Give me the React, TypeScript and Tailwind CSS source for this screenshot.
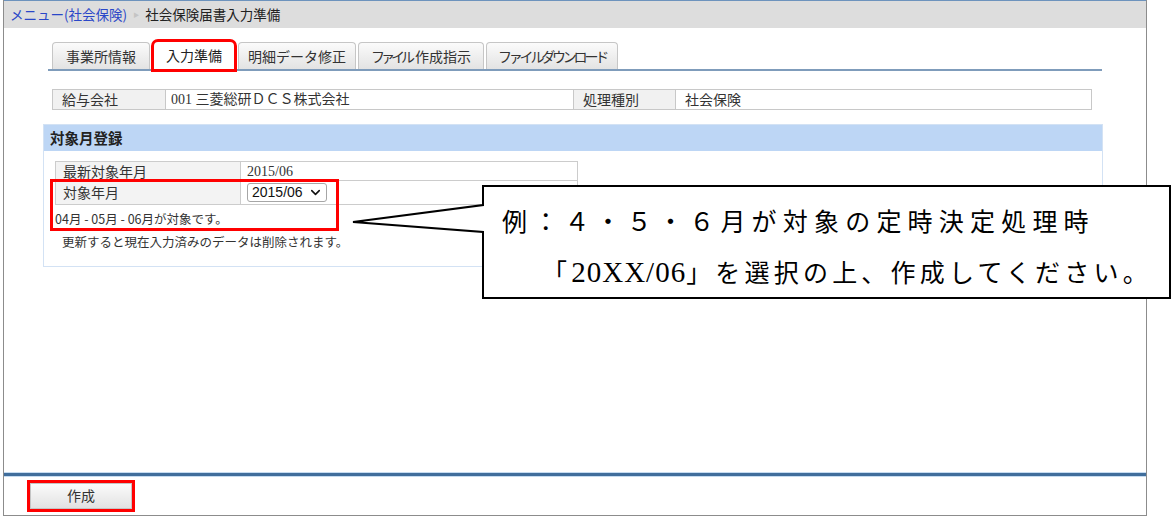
import { ChevronDown } from 'lucide-react';

const ui = "font-['Noto_Sans_CJK_JP','Noto_Sans',sans-serif]";
const serif = "font-['Liberation_Serif','Noto_Sans_CJK_JP',serif]";

type Tab = { label: React.ReactNode; key: string; width: string; active?: boolean };

const tabs: Tab[] = [
  { key: 'office', label: '事業所情報', width: 'w-[98px]' },
  { key: 'prep', label: '入力準備', width: 'w-[80px]', active: true },
  { key: 'detail', label: '明細データ修正', width: 'w-[118px]' },
  {
    key: 'make',
    label: (
      <>
        <span className="tracking-[-4px]">ファイル</span>
        <span className="ml-[4px]">作成指示</span>
      </>
    ),
    width: 'w-[126px]',
  },
  { key: 'dl', label: <span className="tracking-[-3.2px]">ファイルダウンロード</span>, width: 'w-[132px]' },
];

function Tabs() {
  return (
    <div className="ml-[44px] mt-[14px] w-[1054px] border-b-2 border-[#7f9cbb]">
      <div className="flex items-end gap-[2px] pl-[4px]">
        {tabs.map((t) =>
          t.active ? (
            <div
              key={t.key}
              className={`${t.width} mx-[2px] h-[27px] flex items-center justify-center rounded-t-[4px] bg-white text-[14px] text-[#222] outline-[3px] outline-[#ff0000] outline-solid`}
            >
              {t.label}
            </div>
          ) : (
            <div
              key={t.key}
              className={`${t.width} h-[27px] flex items-center justify-center rounded-t-[4px] border border-b-0 border-[#c6c6c6] bg-gradient-to-b from-[#fbfbfb] to-[#e3e3e3] text-[14px] text-[#333]`}
            >
              {t.label}
            </div>
          )
        )}
      </div>
    </div>
  );
}

function InfoTable() {
  return (
    <div className="ml-[48px] mt-[18px] w-[1040px] h-[21px] flex border border-[#c8c8c8] text-[14px] text-[#333]">
      <div className="w-[113px] pl-[9px] bg-[#f1f1f1] border-r border-[#c8c8c8] leading-[19px]">給与会社</div>
      <div className={`w-[408px] pl-[5px] border-r border-[#c8c8c8] leading-[19px] ${serif}`}>001 三菱総研ＤＣＳ株式会社</div>
      <div className="w-[102px] pl-[9px] bg-[#f1f1f1] border-r border-[#c8c8c8] leading-[19px]">処理種別</div>
      <div className="flex-1 pl-[9px] leading-[19px]">社会保険</div>
    </div>
  );
}

function TargetMonth() {
  return (
    <div className="ml-[39px] mt-[14px] w-[1060px] border border-[#d3e2f4]">
      <div className="h-[26px] bg-[#bdd6f5] pl-[6px] text-[14.5px] font-bold leading-[26px] text-[#222]">対象月登録</div>
      <div className="relative h-[115px] pl-[11px] pt-[10px]">
        <div className="w-[523px] border border-[#cccccc] text-[14px] text-[#333]">
          <div className="flex h-[19px] border-b border-[#cccccc]">
            <div className="w-[185px] pl-[7px] bg-[#f3f3f3] border-r border-[#cccccc] leading-[19px]">最新対象年月</div>
            <div className={`pl-[6px] leading-[19px] ${serif}`}>2015/06</div>
          </div>
          <div className="flex h-[23px]">
            <div className="w-[185px] pl-[7px] bg-[#f3f3f3] border-r border-[#cccccc] leading-[22px]">対象年月</div>
            <div className="pl-[6px] pt-[2px]">
              <div className="flex h-[19px] w-[80px] items-center rounded-[3px] border border-[#a6a6a6] bg-white pl-[4px] font-['Liberation_Sans',sans-serif] text-[14px] text-[#111]">
                2015/06
                <ChevronDown className="ml-[5px] h-[15px] w-[15px]" strokeWidth={2.5} />
              </div>
            </div>
          </div>
        </div>
        <p className="mt-[5px] text-[12.5px] leading-[18px] text-[#333]">04月 - 05月 - 06月が対象です。</p>
        <p className="mt-[5px] pl-[7px] text-[12.5px] leading-[18px] text-[#333]">更新すると現在入力済みのデータは削除されます。</p>
        <div className="absolute left-[6px] top-[28px] h-[52px] w-[289px] border-[3px] border-[#ff0000]" />
      </div>
    </div>
  );
}

// speech balloon annotation with a pointer to the left
function Balloon() {
  return (
    <div className="absolute left-[350px] top-[184px] h-[116px] w-[822px]">
      <svg className="absolute inset-0" width="822" height="116" viewBox="0 0 822 116">
        <path d="M133 2 H820 V114 H133 V48 L3 38 L133 21 Z" fill="#fff" stroke="#000" strokeWidth="2" />
      </svg>
      <div className={`absolute left-[152px] top-[20px] text-[25px] leading-[38px] text-black ${serif}`}>
        <p className="tracking-[6.2px]">例：４・５・６月が対象の定時決定処理時</p>
        <p className="mt-[11px] pl-[40px] tracking-[4.2px]">
          「<span className="text-[29px] tracking-[1px]">20XX/06</span>」を選択の上、作成してください。
        </p>
      </div>
    </div>
  );
}

export default function App() {
  return (
    <div className={`relative h-[516px] w-[1174px] overflow-hidden bg-white ${ui}`}>
      <div className="ml-[3px] flex h-[516px] w-[1144px] flex-col border-x border-b border-[#8c8c8c]">
        <div className="h-[1px] bg-[#6d93bd]" />
        <div className="flex h-[27px] items-center bg-[#dddddd] pl-[6px] text-[13.5px]">
          <span className="text-[#2a47c8]">メニュー(社会保険)</span>
          <span className="mx-[6px] text-[6px] text-[#c4c4c4]">▶</span>
          <span className="text-[#222]">社会保険届書入力準備</span>
        </div>

        <div className="flex-1">
          <Tabs />
          <InfoTable />
          <TargetMonth />
        </div>

        <div className="h-[1px] bg-[#c6dcf1]" />
        <div className="h-[3px] bg-[#416e9c]" />
        <div className="h-[1px] bg-[#c6dcf1]" />
        <div className="h-[38px] pl-[26px] pt-[5px]">
          <button className="h-[26px] w-[102px] border border-[#c4c4c4] bg-gradient-to-b from-[#fbfbfb] to-[#e2e2e2] text-[14px] text-[#333] outline-[3px] outline-[#ff0000] outline-solid">
            作成
          </button>
        </div>
      </div>
      <Balloon />
    </div>
  );
}
